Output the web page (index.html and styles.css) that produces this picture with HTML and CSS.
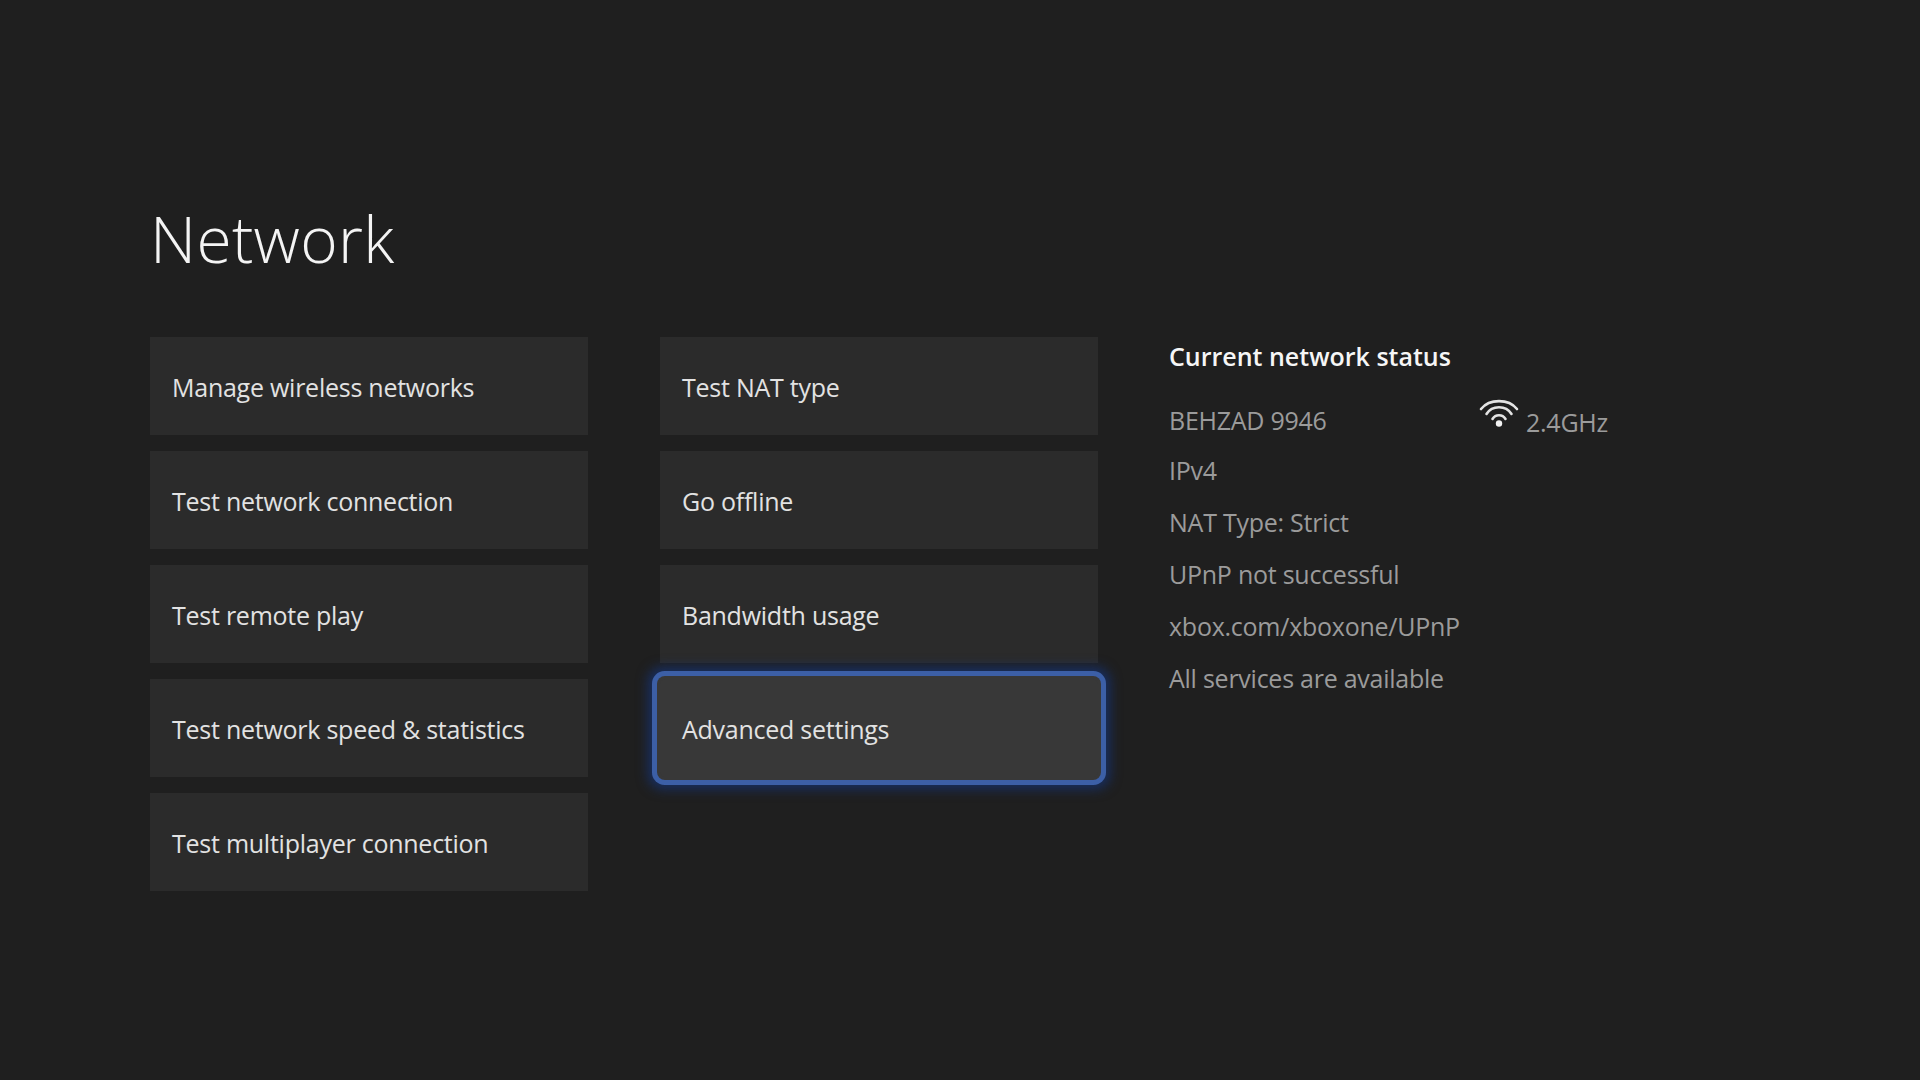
FILE: index.html
```html
<!DOCTYPE html>
<html lang="en">
<head>
  <meta charset="UTF-8">
  <title>Network</title>
  <link rel="stylesheet" href="styles.css">
</head>

<body>
  <div class="page">
    <h1>Network</h1>

    <div class="columns">
      <div class="tile-column">
        <div class="tile">Manage wireless networks</div>
        <div class="tile">Test network connection</div>
        <div class="tile">Test remote play</div>
        <div class="tile">Test network speed &amp; statistics</div>
        <div class="tile">Test multiplayer connection</div>
      </div>

      <div class="tile-column">
        <div class="tile">Test NAT type</div>
        <div class="tile">Go offline</div>
        <div class="tile">Bandwidth usage</div>
        <div class="tile focused">Advanced settings</div>
      </div>

      <div class="status">
        <div class="status-title">Current network status</div>
        <div class="status-row network-row">
          <span class="network-name">BEHZAD 9946</span>
          <svg class="wifi-icon" viewBox="0 0 40 32" width="40" height="32" fill="none" stroke="#e4e4e4" stroke-width="2.6" stroke-linecap="round">
            <path d="M2 12C10.5 1.5 29.5 1.5 38 12"/>
            <path d="M7.5 17C13 8 27 8 32.5 17"/>
            <path d="M13.5 22C16.5 17 23.5 17 26.5 22"/>
            <circle cx="20" cy="26.5" r="3.2" fill="#f2f2f2" stroke="none"/>
          </svg>
          <span class="band">2.4GHz</span>
        </div>
        <div class="status-row">IPv4</div>
        <div class="status-row">NAT Type: Strict</div>
        <div class="status-row">UPnP not successful</div>
        <div class="status-row">xbox.com/xboxone/UPnP</div>
        <div class="status-row">All services are available</div>
      </div>
    </div>
  </div>
</body>
</html>
```

FILE: styles.css
```css
body {
  margin: 0;
  background: #1f1f1f;
  font-family: "Open Sans", "Noto Sans", sans-serif;
  height: 1080px;
  overflow: hidden;
}
.page {
  padding: 192px 0 0 150px;
}
h1 {
  margin: 0 0 51px 0;
  font-size: 64px;
  line-height: 94px;
  font-weight: 300;
  letter-spacing: 0.3px;
  color: #f4f4f4;
}
.columns {
  display: flex;
  gap: 72px;
  align-items: flex-start;
}
.tile-column {
  width: 438px;
  display: flex;
  flex-direction: column;
  gap: 16px;
}
.tile {
  height: 98px;
  box-sizing: border-box;
  padding: 2px 0 0 22px;
  display: flex;
  align-items: center;
  background: #2b2b2b;
  color: #e2e2e2;
  font-size: 25px;
  letter-spacing: -0.25px;
}
.tile.focused {
  background: #383838;
  box-shadow: 0 0 0 3px #383838, 0 0 0 8px #3c5fa6, 0 0 12px 12px rgba(22, 52, 120, 0.75);
  border-radius: 5px;
}
.status {
  padding-top: 0;
  margin-left: -1px;
}
.status-title {
  font-size: 25px;
  line-height: 38px;
  font-weight: 600;
  color: #f6f6f6;
  margin-bottom: 20px;
}
.status-row {
  font-size: 25px;
  line-height: 52px;
  letter-spacing: -0.25px;
  color: #9b9b9b;
}
.network-row {
  display: flex;
  align-items: center;
  height: 49px;
}
.network-name {
  width: 310px;
}
.wifi-icon {
  margin-top: -13px;
  flex-shrink: 0;
}
.band {
  margin: 4px 0 0 7px;
}
```
